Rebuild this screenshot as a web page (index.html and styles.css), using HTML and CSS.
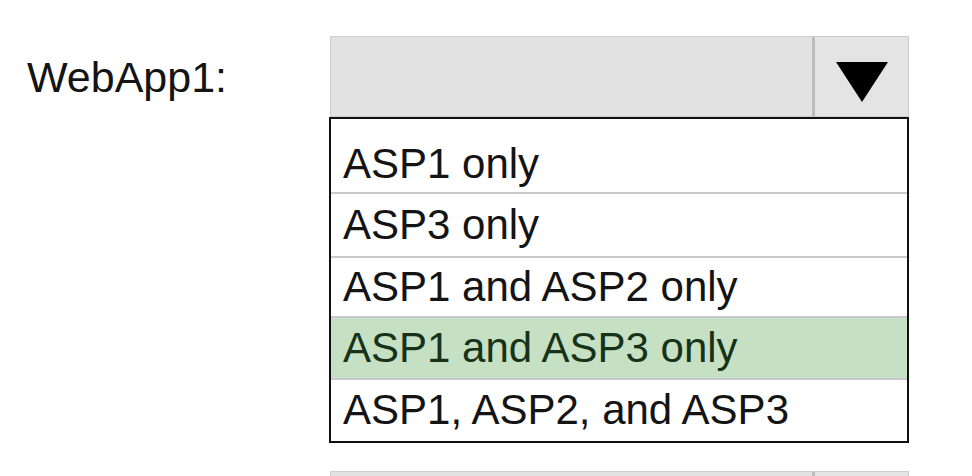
FILE: index.html
```html
<!DOCTYPE html>
<html>
<head>
<meta charset="utf-8">
<link rel="stylesheet" href="styles.css">
</head>
<body>
<div class="page">
  <div class="row">
    <div class="label">WebApp1:</div>
    <div class="field">
      <div class="select">
        <div class="select-value"></div>
        <div class="select-btn">
          <svg width="52" height="40" viewBox="0 0 52 40"><polygon points="0,0 52,0 26,40" fill="#000"/></svg>
        </div>
      </div>
      <ul class="list">
        <li class="opt first">ASP1 only</li>
        <li class="opt second">ASP3 only</li>
        <li class="opt third">ASP1 and ASP2 only</li>
        <li class="opt sel">ASP1 and ASP3 only</li>
        <li class="opt last">ASP1, ASP2, and ASP3</li>
      </ul>
      <div class="select next">
        <div class="select-value"></div>
        <div class="select-btn"></div>
      </div>
    </div>
  </div>
</div>
</body>
</html>
```

FILE: styles.css
```css
html, body {
  margin: 0;
  padding: 0;
  background: #ffffff;
  overflow: hidden;
}
.page {
  width: 972px;
  height: 476px;
  overflow: hidden;
  font-family: "Liberation Sans", Arial, sans-serif;
  color: #141414;
}
.row {
  display: flex;
  padding-top: 36px;
}
.label {
  width: 329px;
  padding-left: 27px;
  box-sizing: border-box;
  font-size: 43px;
  line-height: 43px;
  padding-top: 20px;
}
.field {
  width: 580px;
  display: flex;
  flex-direction: column;
}
.select {
  height: 81px;
  display: flex;
  border: 1px solid #cdcdcd;
  background: #e2e2e2;
  box-sizing: border-box;
  margin-left: 1px;
}
.select-value {
  flex: 1;
  border-right: 3px solid #bdbdbd;
}
.select-btn {
  width: 93px;
  display: flex;
  justify-content: center;
  align-items: flex-start;
  padding-top: 25px;
  box-sizing: border-box;
  background: #e4e4e4;
}
.list {
  list-style: none;
  margin: 0;
  padding: 0;
  border: 2px solid #111;
  width: 580px;
  box-sizing: border-box;
  background: #fff;
}
.opt {
  font-size: 42px;
  line-height: 46px;
  height: 62px;
  box-sizing: border-box;
  padding: 7px 0 0 12px;
  border-bottom: 2px solid #c9c9c9;
}
.opt.first {
  height: 75px;
  padding-top: 22px;
}
.opt.second {
  height: 64px;
  padding-top: 8px;
}
.opt.third {
  height: 60px;
  padding-top: 6px;
}
.opt.last {
  border-bottom: none;
  height: 61px;
}
.opt.sel {
  background: #c6e0c4;
  color: #16331a;
}
.next {
  margin-top: 28px;
  height: 8px;
}
```
